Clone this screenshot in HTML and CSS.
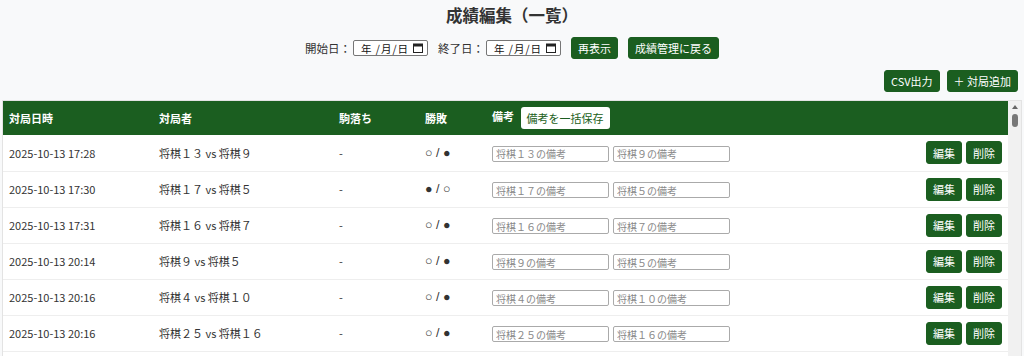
FILE: index.html
```html
<!DOCTYPE html>
<html lang="ja">
<head>
  <meta charset="UTF-8">
  <title>成績編集（一覧）</title>
  <meta name="viewport" content="width=device-width, initial-scale=1.0">
  <link rel="stylesheet" href="styles.css">
</head>
<body>
  <div class="page">
    <h1 class="title">成績編集（一覧）</h1>

    <div class="filters">
      <label class="filter">開始日：
        <span class="date-box"><span>年 /月/日</span>
          <svg class="cal" viewBox="0 0 10 10" width="10" height="10"><rect x="0.5" y="1" width="9" height="8.5" fill="none" stroke="#222" stroke-width="1"/><rect x="0.5" y="1" width="9" height="2.5" fill="#222"/></svg>
        </span>
      </label>
      <label class="filter">終了日：
        <span class="date-box"><span>年 /月/日</span>
          <svg class="cal" viewBox="0 0 10 10" width="10" height="10"><rect x="0.5" y="1" width="9" height="8.5" fill="none" stroke="#222" stroke-width="1"/><rect x="0.5" y="1" width="9" height="2.5" fill="#222"/></svg>
        </span>
      </label>
      <button class="btn">再表示</button>
      <button class="btn">成績管理に戻る</button>
    </div>

    <div class="toolbar">
      <button class="btn">CSV出力</button>
      <button class="btn">＋ 対局追加</button>
    </div>

    <div class="table-wrap">
      <div class="table-scroll">
        <table class="games">
          <thead>
            <tr>
              <th class="c-date">対局日時</th>
              <th class="c-players">対局者</th>
              <th class="c-handicap">駒落ち</th>
              <th class="c-result">勝敗</th>
              <th class="c-note">備考 <button class="btn-light">備考を一括保存</button></th>
              <th class="c-actions"></th>
            </tr>
          </thead>
          <tbody>
            <tr>
              <td>2025-10-13 17:28</td>
              <td>将棋１３ vs 将棋９</td>
              <td class="muted">-</td>
              <td class="result">○ / ●</td>
              <td class="notes"><input placeholder="将棋１３の備考"><input placeholder="将棋９の備考"></td>
              <td class="actions"><button class="btn">編集</button><button class="btn">削除</button></td>
            </tr>
            <tr>
              <td>2025-10-13 17:30</td>
              <td>将棋１７ vs 将棋５</td>
              <td class="muted">-</td>
              <td class="result">● / ○</td>
              <td class="notes"><input placeholder="将棋１７の備考"><input placeholder="将棋５の備考"></td>
              <td class="actions"><button class="btn">編集</button><button class="btn">削除</button></td>
            </tr>
            <tr>
              <td>2025-10-13 17:31</td>
              <td>将棋１６ vs 将棋７</td>
              <td class="muted">-</td>
              <td class="result">○ / ●</td>
              <td class="notes"><input placeholder="将棋１６の備考"><input placeholder="将棋７の備考"></td>
              <td class="actions"><button class="btn">編集</button><button class="btn">削除</button></td>
            </tr>
            <tr>
              <td>2025-10-13 20:14</td>
              <td>将棋９ vs 将棋５</td>
              <td class="muted">-</td>
              <td class="result">○ / ●</td>
              <td class="notes"><input placeholder="将棋９の備考"><input placeholder="将棋５の備考"></td>
              <td class="actions"><button class="btn">編集</button><button class="btn">削除</button></td>
            </tr>
            <tr>
              <td>2025-10-13 20:16</td>
              <td>将棋４ vs 将棋１０</td>
              <td class="muted">-</td>
              <td class="result">○ / ●</td>
              <td class="notes"><input placeholder="将棋４の備考"><input placeholder="将棋１０の備考"></td>
              <td class="actions"><button class="btn">編集</button><button class="btn">削除</button></td>
            </tr>
            <tr>
              <td>2025-10-13 20:16</td>
              <td>将棋２５ vs 将棋１６</td>
              <td class="muted">-</td>
              <td class="result">○ / ●</td>
              <td class="notes"><input placeholder="将棋２５の備考"><input placeholder="将棋１６の備考"></td>
              <td class="actions"><button class="btn">編集</button><button class="btn">削除</button></td>
            </tr>
          </tbody>
        </table>
      </div>
      <div class="scrollbar">
        <span class="arrow-up"></span>
        <span class="thumb"></span>
      </div>
    </div>
  </div>
</body>
</html>
```

FILE: styles.css
```css
html, body {
  margin: 0;
  padding: 0;
  overflow: hidden;
}
body {
  background: #f8f9fa;
  color: #333;
  font-family: "Noto Sans CJK JP", "Noto Sans", sans-serif;
  font-size: 11px;
}
.page {
  padding: 0 2px;
}
.title {
  margin: 0;
  padding-top: 4px;
  text-align: center;
  font-size: 16.5px;
  font-weight: bold;
  color: #333;
  line-height: 22px;
}
.filters {
  display: flex;
  justify-content: center;
  align-items: center;
  gap: 10px;
  margin-top: 11px;
  height: 22px;
}
.filter {
  display: inline-flex;
  align-items: center;
  gap: 2px;
  font-size: 11.5px;
  color: #333;
}
.date-box {
  display: inline-flex;
  align-items: center;
  justify-content: space-between;
  width: 75px;
  height: 16px;
  box-sizing: border-box;
  padding: 0 4px 0 7px;
  border: 1px solid #767676;
  border-radius: 2px;
  background: #fff;
  font-size: 10.5px;
  letter-spacing: 1px;
  color: #111;
}
.cal { display: block; }
.btn {
  font-family: inherit;
  font-size: 11px;
  background: #1b5e20;
  color: #fff;
  border: 1px solid #1b5e20;
  border-radius: 3px;
  height: 22px;
  padding: 0 6px;
  cursor: pointer;
}
.toolbar {
  display: flex;
  justify-content: flex-end;
  gap: 7px;
  margin-top: 11px;
  padding-right: 4px;
}
.table-wrap {
  display: flex;
  margin-top: 8px;
  height: 400px;
  border: 1px solid #e3e3e3;
  background: #fff;
}
.table-scroll {
  flex: 1;
  overflow: hidden;
}
table.games {
  width: 100%;
  border-collapse: collapse;
}
.games th {
  background: #1b5e20;
  color: #fff;
  font-weight: bold;
  text-align: left;
  height: 34px;
  padding: 0 6px;
}
.games td {
  height: 36px;
  padding: 0 6px;
  border-bottom: 1px solid #eee;
  color: #333;
  box-sizing: border-box;
}
.c-date { width: 138px; }
.c-players { width: 168px; }
.c-handicap { width: 74px; }
.c-result { width: 55px; }
.c-note { width: 240px; white-space: nowrap; }
.btn-light {
  font-family: inherit;
  font-size: 11px;
  background: #fff;
  color: #1b5e20;
  border: none;
  border-radius: 3px;
  height: 22px;
  padding: 0 6px;
  margin-left: 4px;
  vertical-align: middle;
}
.muted { color: #777; }
.result {
  font-family: "Liberation Sans", sans-serif;
  font-size: 12.5px;
  color: #333;
}
.notes { white-space: nowrap; }
.notes input {
  width: 117px;
  height: 16px;
  box-sizing: border-box;
  border: 1px solid #aaa;
  border-radius: 2px;
  padding: 0 3px;
  font-family: inherit;
  font-size: 10px;
  margin-right: 4px;
  vertical-align: middle;
}
.notes input::placeholder { color: #888; }
.actions {
  text-align: right;
  white-space: nowrap;
}
.actions .btn {
  height: 23px;
  margin-left: 4px;
  padding: 0 6px;
}
.scrollbar {
  width: 13px;
  flex: none;
  background: #f1f1f1;
  display: flex;
  flex-direction: column;
  align-items: center;
  padding-top: 4px;
  box-sizing: border-box;
}
.arrow-up {
  width: 0;
  height: 0;
  border-left: 3px solid transparent;
  border-right: 3px solid transparent;
  border-bottom: 4px solid #666;
}
.thumb {
  width: 6px;
  height: 13px;
  margin-top: 5px;
  border-radius: 3px;
  background: #777;
}
```
